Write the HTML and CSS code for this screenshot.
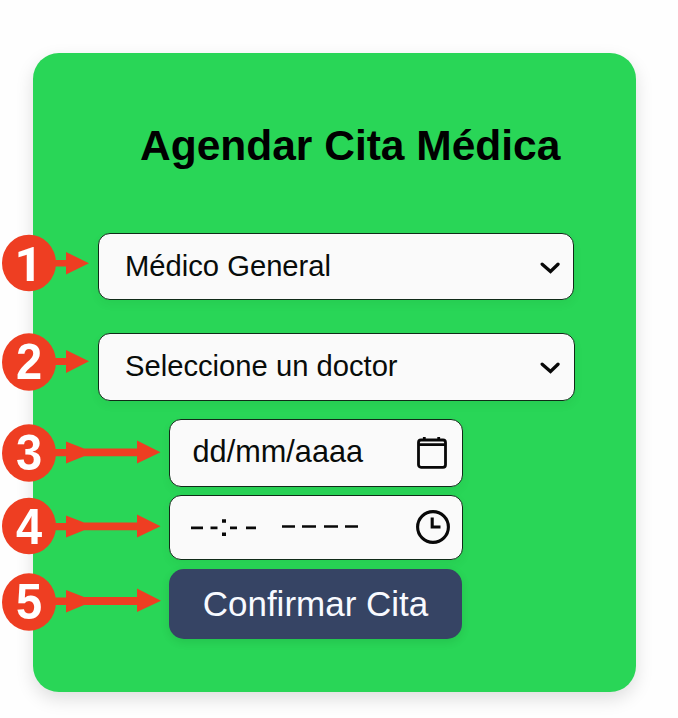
FILE: index.html
```html
<!DOCTYPE html>
<html lang="es">
<head>
<meta charset="utf-8">
<title>Agendar Cita Médica</title>
<link rel="stylesheet" href="styles.css">
</head>
<body>
<main class="card">
  <h1 class="title">Agendar Cita Médica</h1>
  <form class="form">
    <div class="field select">
      <span class="label">Médico General</span>
      <svg class="chevron" viewBox="0 0 20 12"><path d="M2.200 2.200 L10.500 9.500 L18 2.200"/></svg>
    </div>
    <div class="field select second">
      <span class="label">Seleccione un doctor</span>
      <svg class="chevron" viewBox="0 0 20 12"><path d="M2.200 2.200 L10.500 9.500 L18 2.200"/></svg>
    </div>
    <div class="field date">
      <span class="label">dd/mm/aaaa</span>
      <svg class="calendar" viewBox="0 0 30 33"><rect x="1.5" y="4" width="27" height="27.3" rx="2.5"/><path d="M1.5 8.700H28.5M7.3 1V4M21.7 1V4"/></svg>
    </div>
    <div class="field time">
      <svg class="blank-time" viewBox="0 0 170 20"><path d="M0 10.800h12M19.500 10.800h7M39 10.800h7M55 10.800h10M91 9.500h13M111 9.500h14M133 9.500h14M154 9.500h13"/><path class="dots" d="M31 4h4M31 17.200h4"/></svg>
      <svg class="clock" viewBox="0 0 34 34"><circle cx="17" cy="17" r="15.4"/><path d="M16.200 7.500V17H24.500"/></svg>
    </div>
    <button class="confirm" type="button">Confirmar Cita</button>
  </form>
</main>
<svg class="marker m1" viewBox="0 0 162 60"><ellipse cx="29" cy="30" rx="27" ry="28.300"/><path d="M54 27H66V19L89 30.300L66 41.500V33.500H54Z"/><text class="one" x="28.500" y="47.500">1</text></svg>
<svg class="marker m2" viewBox="0 0 162 60"><ellipse cx="29" cy="30" rx="27" ry="28.700"/><path d="M54 26H66V18L89 29.300L66 41V33H54Z"/><text x="31" y="46.800">2</text></svg>
<svg class="marker m3" viewBox="0 0 162 60"><ellipse cx="29" cy="30" rx="27" ry="28.700"/><path d="M54 26H66V18.500L84 25.500H137V17.500L160.500 29.300L137 40.500V33.300H84L66 40.500V33.300H54Z"/><text x="31" y="47.300">3</text></svg>
<svg class="marker m4" viewBox="0 0 162 60"><ellipse cx="29" cy="30" rx="27" ry="28.300"/><path d="M54 27H66V19.500L84 26.500H137V18.500L160.500 30.300L137 41.500V34.300H84L66 41.500V34.300H54Z"/><text x="31" y="48">4</text></svg>
<svg class="marker m5" viewBox="0 0 162 60"><ellipse cx="29" cy="30" rx="27" ry="28.700"/><path d="M54 25.500H66V18L84 25H137V16.500L161 28.800L137 40V33H84L66 40.500V33H54Z"/><text x="31" y="46.800">5</text></svg>
</body>
</html>
```
FILE: styles.css
```css
* {
  box-sizing: border-box;
}

body {
  position: relative;
  margin: 0;
  padding: 52.5px 0 0 32.5px;
  width: 678px;
  height: 718px;
  overflow: hidden;
  background: #fefefe;
  font-family: "Liberation Sans", Arial, sans-serif;
  color: #080c0a;
}

.card {
  width: 603.5px;
  height: 639px;
  border-radius: 26px;
  background: #29d657;
  box-shadow: 0 7px 18px rgba(0, 0, 0, 0.13);
  padding: 68px 0 0 65px;
}

.title {
  margin: 0 0 63px 42.5px;
  font-size: 42.5px;
  line-height: 49px;
  font-weight: bold;
  color: #000;
  white-space: nowrap;
}

.form {
  display: flex;
  flex-direction: column;
}

.field {
  display: flex;
  align-items: center;
  justify-content: space-between;
  border: 1px solid #102b18;
  border-radius: 12px;
  background: #fafafa;
  box-shadow: 0 4px 10px rgba(0, 60, 20, 0.06);
}

.label {
  white-space: nowrap;
}

.select {
  width: 476px;
  height: 67.5px;
  padding: 0 12.5px 0 26.5px;
  font-size: 29.2px;
  margin-bottom: 33px;
}

.select.second {
  width: 477px;
  height: 68px;
  margin-bottom: 18px;
  padding: 0 13.5px 2px 26.5px;
}

.date,
.time {
  width: 294px;
  margin-left: 71px;
}

.date {
  height: 68px;
  margin-bottom: 8px;
  padding: 0 15px 3px 23px;
  font-size: 30.7px;
}

.time {
  height: 65px;
  margin-bottom: 9px;
  padding: 0 12px 2px 21px;
}

.chevron,
.calendar,
.clock,
.blank-time {
  fill: none;
  stroke: #080808;
  stroke-width: 3.3;
  flex: none;
}

.chevron {
  width: 20px;
  height: 12px;
  margin-top: 3px;
  stroke-linecap: round;
}

.calendar {
  width: 30px;
  height: 33px;
  margin-top: 2px;
  stroke-width: 2.8;
}

.clock {
  width: 34px;
  height: 34px;
  stroke-width: 3.1;
}

.blank-time {
  width: 170px;
  height: 20px;
  stroke-width: 2.7;
}

.dots {
  stroke-width: 3.6;
}

.confirm {
  width: 293px;
  height: 70px;
  margin-left: 71px;
  padding: 0 0 0 1px;
  border: 0;
  border-radius: 15px;
  background: #364464;
  box-shadow: 0 3px 8px rgba(0, 60, 20, 0.12);
  color: #f8faff;
  font: 35px "Liberation Sans", Arial, sans-serif;
}

.marker {
  position: absolute;
  left: 0;
  width: 162px;
  height: 60px;
  fill: #ee3e22;
}

.marker text {
  fill: #fff;
  font-size: 50px;
  font-weight: bold;
  text-anchor: middle;
  transform: scaleX(0.94);
}

.marker .one {
  font-family: Roboto, sans-serif;
  font-size: 49px;
  transform: none;
}

.m1 { top: 233px; }
.m2 { top: 332px; }
.m3 { top: 423px; }
.m4 { top: 496px; }
.m5 { top: 571.5px; }
```
